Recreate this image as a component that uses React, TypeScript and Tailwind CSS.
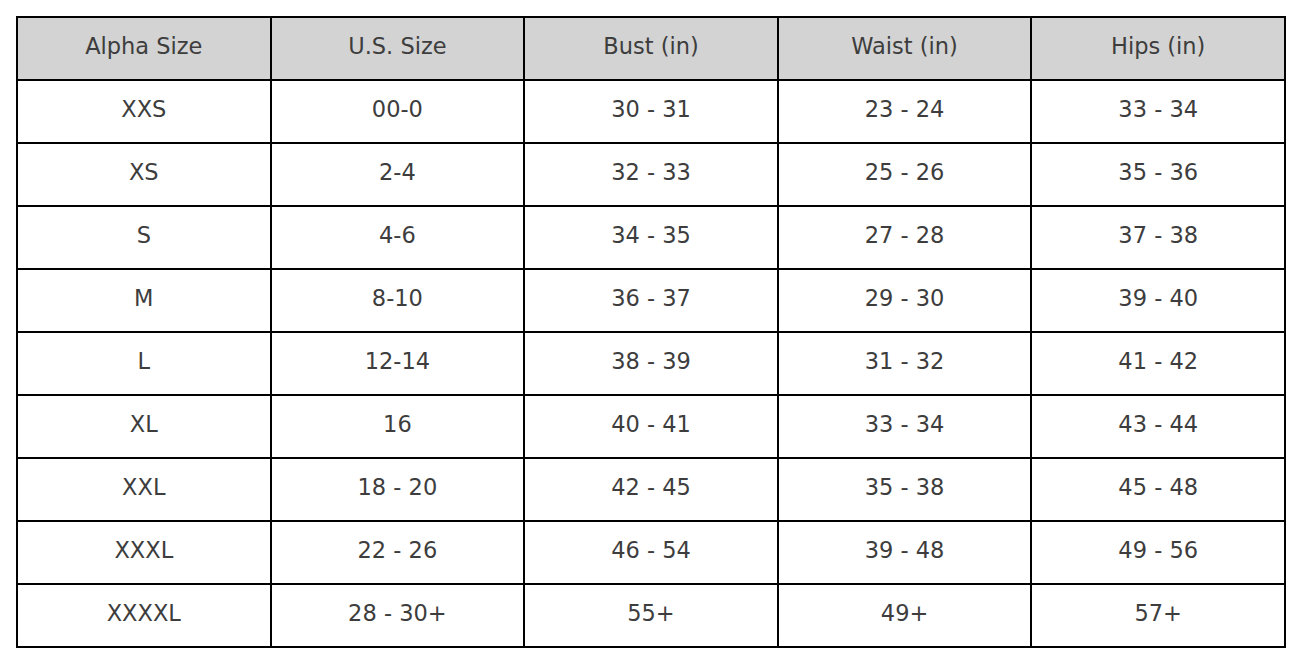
const headers = ["Alpha Size", "U.S. Size", "Bust (in)", "Waist (in)", "Hips (in)"]

const rows = [
  ["XXS", "00-0", "30 - 31", "23 - 24", "33 - 34"],
  ["XS", "2-4", "32 - 33", "25 - 26", "35 - 36"],
  ["S", "4-6", "34 - 35", "27 - 28", "37 - 38"],
  ["M", "8-10", "36 - 37", "29 - 30", "39 - 40"],
  ["L", "12-14", "38 - 39", "31 - 32", "41 - 42"],
  ["XL", "16", "40 - 41", "33 - 34", "43 - 44"],
  ["XXL", "18 - 20", "42 - 45", "35 - 38", "45 - 48"],
  ["XXXL", "22 - 26", "46 - 54", "39 - 48", "49 - 56"],
  ["XXXXL", "28 - 30+", "55+", "49+", "57+"],
]

export default function App() {
  return (
    <div className="bg-white w-[1300px] h-[663px] pt-[16px] pl-[16px] font-['DejaVu_Sans',sans-serif] text-[22.5px] text-[#3d3d3d]">
      <table className="table-fixed border-collapse w-[1270px] border-2 border-black">
        <thead>
          <tr className="h-[63px] bg-[#d3d3d3]">
            {headers.map((h) => (
              <th key={h} className="border-2 border-black font-normal text-center p-0 pb-[3px]">
                {h}
              </th>
            ))}
          </tr>
        </thead>
        <tbody>
          {rows.map((row, i) => (
            <tr key={i} className="h-[63px]">
              {row.map((cell, j) => (
                <td key={j} className="border-2 border-black text-center p-0 pb-[3px]">
                  {cell}
                </td>
              ))}
            </tr>
          ))}
        </tbody>
      </table>
    </div>
  )
}
